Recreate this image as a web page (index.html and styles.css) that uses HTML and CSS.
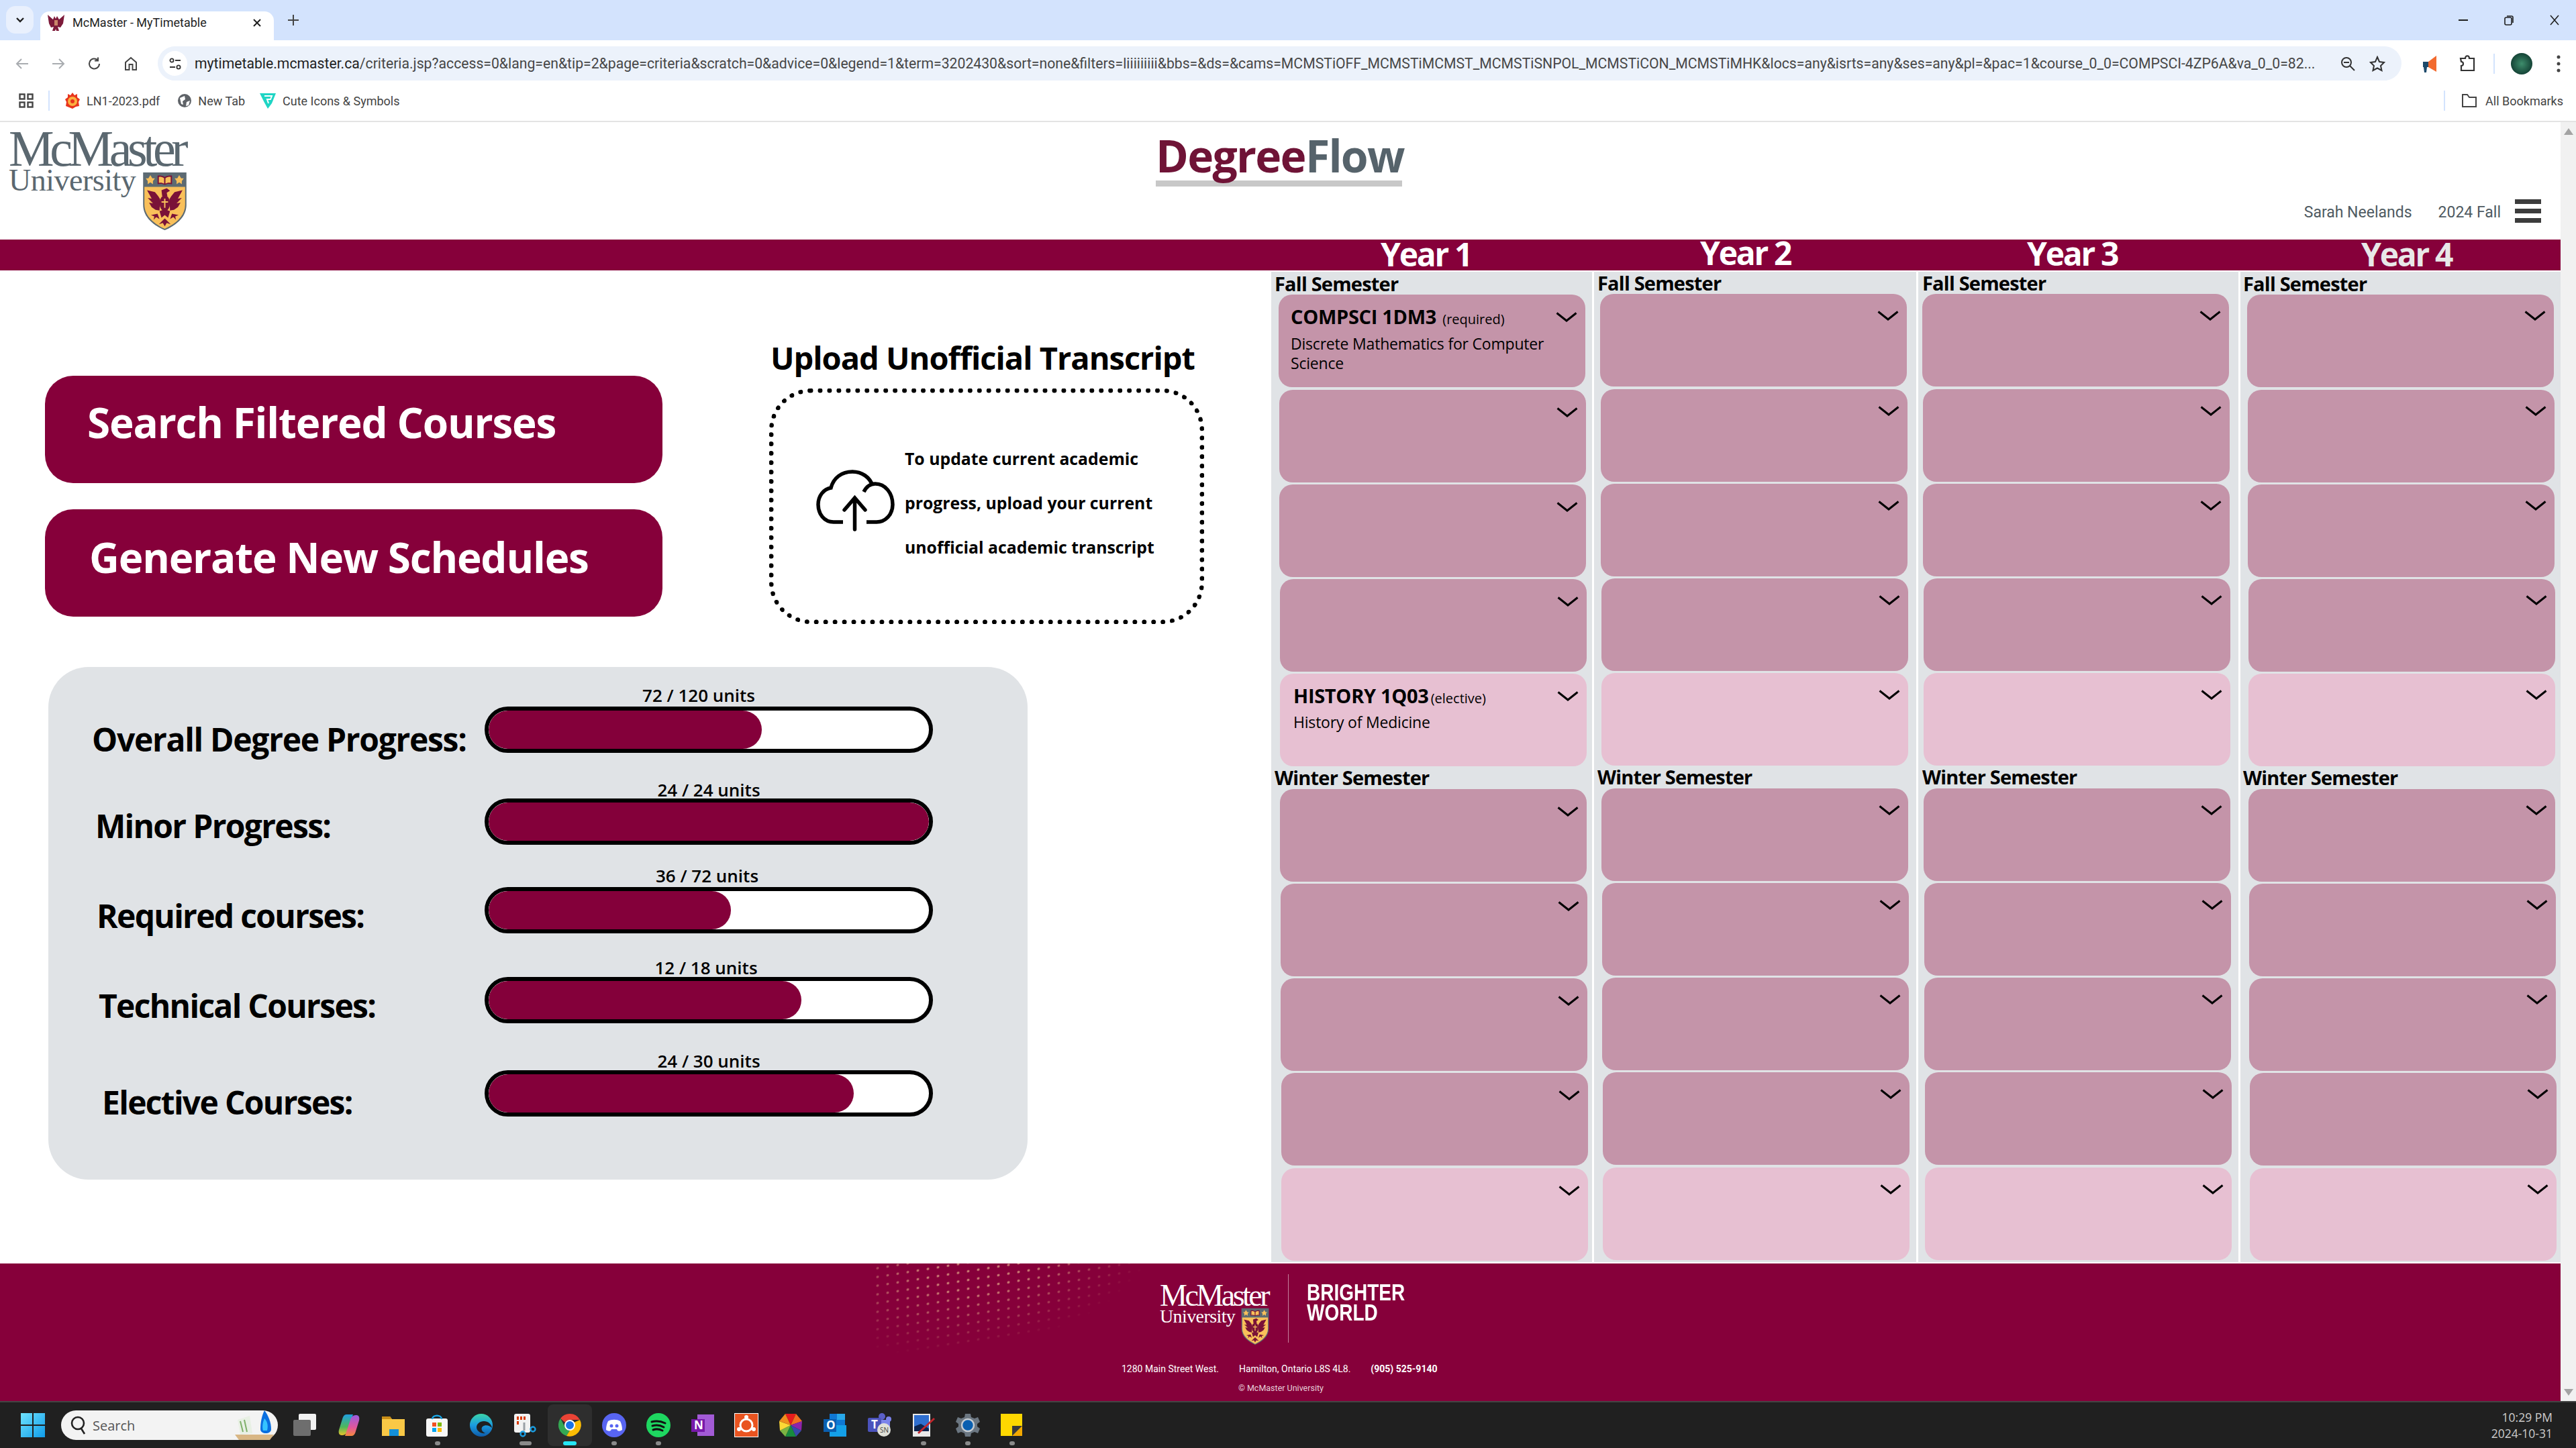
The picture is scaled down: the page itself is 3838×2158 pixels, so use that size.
FILE: index.html
```html
<!DOCTYPE html>
<html lang="en">

<head>
    <meta charset="UTF-8" />
    <title>McMaster - MyTimetable</title>
    <link rel="stylesheet" href="styles.css">
</head>

<body>
    <svg class="defs" width="0" height="0">
        <symbol id="chevron" viewBox="0 0 32 15">
            <polyline points="1.5,1.5 16,13 30.5,1.5" fill="none" stroke="#000" stroke-width="3" />
        </symbol>
        <symbol id="shield" viewBox="0 0 68 90">
            <path d="M1 1H67V50C67 70 50 82 34 89C18 82 1 70 1 50Z" fill="#5c6a72" />
            <path d="M3 23H65V50C65 68 49 80 34 87C19 80 3 68 3 50Z" fill="#f9c05a" />
            <path d="M23 6C27 5 31 6 34 8C37 6 41 5 45 6V19C41 18 37 18 34 20C31 18 27 18 23 19Z" fill="#7a1238" />
            <path d="M25 8C28 7 31 8 33 10V18C31 17 28 16 25 17ZM35 10C37 8 40 7 43 8V17C40 16 37 17 35 18Z" fill="#f9c05a" />
            <path d="M12 5L15 10L19 10L16 14L16 19L12 16L8 19L8 14L5 10L9 10ZM56 5L59 10L63 10L60 14L60 19L56 16L52 19L52 14L49 10L53 10Z" fill="#f9c05a" />
            <g fill="#7a1238">
                <path d="M7 28L19 31L24 37L27 42L26 59L20 58L14 54L10 47L16 48L8 40L14 41Z" />
                <path d="M61 28L49 31L44 37L41 42L42 59L48 58L54 54L58 47L52 48L60 40L54 41Z" />
                <path d="M29 28L37 25L42 29L37 32L38 37L30 37Z" />
                <ellipse cx="34" cy="48" rx="8" ry="12" />
                <path d="M26 60L34 57L42 60L39 70L34 66L29 70Z" />
                <path d="M25 80L34 71L43 80L37 78L34 83L31 78Z" />
                <path d="M13 66L23 64L26 72L21 69L17 73L18 68ZM55 66L45 64L42 72L47 69L51 73L50 68Z" />
            </g>
            <path d="M33 41H35V45H39V47H35V55H33V47H29V45H33Z" fill="#f9c05a" />
        </symbol>
        <symbol id="favicon" viewBox="0 0 27 27">
            <path d="M1 2L9 9L11 4L13 8L15 4L18 9L26 2L24 15L20 21L16 20L18 26H14L13 23L12 26H8L10 20L6 21L3 15Z" fill="#7d1a3a" />
            <path d="M11 10H16V18H11Z" fill="#c9866a" />
        </symbol>
    </svg>

    <!-- BROWSER -->
    <div class="tabstrip">
        <div class="tab-search">
            <svg width="14" height="10" viewBox="0 0 14 10"><polyline points="2,2 7,7 12,2" fill="none" stroke="#1f1f1f" stroke-width="2.4" /></svg>
        </div>
        <div class="tab">
            <svg class="tab-icon" width="27" height="27"><use href="#favicon" /></svg>
            <span class="tab-title">McMaster - MyTimetable</span>
            <svg class="tab-close" width="14" height="14" viewBox="0 0 14 14"><path d="M2 2L12 12M12 2L2 12" stroke="#1f1f1f" stroke-width="2" /></svg>
        </div>
        <svg class="tab-new" width="18" height="18" viewBox="0 0 18 18"><path d="M9 1V17M1 9H17" stroke="#444" stroke-width="2" /></svg>
        <div class="window-controls">
            <svg width="16" height="16" viewBox="0 0 16 16"><path d="M1 8H15" stroke="#1f1f1f" stroke-width="2" /></svg>
            <svg width="16" height="16" viewBox="0 0 16 16"><rect x="2" y="4" width="10" height="11" rx="2" fill="none" stroke="#1f1f1f" stroke-width="1.6" /><path d="M5 2H12C13 2 14 3 14 4V12" fill="none" stroke="#1f1f1f" stroke-width="1.6" /></svg>
            <svg width="16" height="16" viewBox="0 0 16 16"><path d="M2 1L14 15M14 1L2 15" stroke="#1f1f1f" stroke-width="1.6" /></svg>
        </div>
    </div>

    <div class="toolbar">
        <svg class="nav-icon" width="22" height="22" viewBox="0 0 22 22"><path d="M20 11H3M10 4L3 11L10 18" fill="none" stroke="#a9acb0" stroke-width="2" /></svg>
        <svg class="nav-icon" width="22" height="22" viewBox="0 0 22 22"><path d="M2 11H19M12 4L19 11L12 18" fill="none" stroke="#a9acb0" stroke-width="2" /></svg>
        <svg class="nav-icon" width="22" height="22" viewBox="0 0 22 22"><path d="M18 11A7.5 7.5 0 1 1 15.5 5.4M16 1.5V6.5H11" fill="none" stroke="#444" stroke-width="2" /></svg>
        <svg class="nav-icon" width="22" height="22" viewBox="0 0 22 22"><path d="M3 20V9L11 2L19 9V20H13.5V12H8.5V20Z" fill="none" stroke="#444" stroke-width="2" /></svg>
        <div class="omnibox">
            <div class="site-settings">
                <svg width="20" height="20" viewBox="0 0 20 20"><circle cx="5" cy="5" r="2.6" fill="none" stroke="#333" stroke-width="1.8" /><path d="M10 5H18M2 15H10" stroke="#333" stroke-width="1.8" /><circle cx="15" cy="15" r="2.6" fill="none" stroke="#333" stroke-width="1.8" /></svg>
            </div>
            <div class="url"><b>mytimetable.mcmaster.ca</b>/criteria.jsp?access=0&amp;lang=en&amp;tip=2&amp;page=criteria&amp;scratch=0&amp;advice=0&amp;legend=1&amp;term=3202430&amp;sort=none&amp;filters=liiiiiiiii&amp;bbs=&amp;ds=&amp;cams=MCMSTiOFF_MCMSTiMCMST_MCMSTiSNPOL_MCMSTiCON_MCMSTiMHK&amp;locs=any&amp;isrts=any&amp;ses=any&amp;pl=&amp;pac=1&amp;course_0_0=COMPSCI-4ZP6A&amp;va_0_0=82...</div>
            <svg class="omni-zoom" width="24" height="24" viewBox="0 0 24 24"><circle cx="10" cy="10" r="7" fill="none" stroke="#333" stroke-width="2" /><path d="M15 15L22 22M6 10H14" stroke="#333" stroke-width="2" /></svg>
            <svg class="omni-star" width="24" height="24" viewBox="0 0 24 24"><path d="M12 2L15 9L22 10L17 15L18.5 22L12 18.5L5.5 22L7 15L2 10L9 9Z" fill="none" stroke="#333" stroke-width="2" /></svg>
        </div>
        <svg class="ext-icon" width="26" height="30" viewBox="0 0 26 30"><path d="M2 12H10V20H8L7 28H4L3 20H2Z" fill="#1d4a6b" /><path d="M10 12L22 3V27L10 20Z" fill="#f26a2e" /></svg>
        <svg class="ext-puzzle" width="24" height="28" viewBox="0 0 24 28"><path d="M2 6H9C9 1 15 1 15 6H22V24H3V17C7 17 7 11 3 11Z" fill="none" stroke="#333" stroke-width="2.2" /></svg>
        <div class="toolbar-sep"></div>
        <div class="avatar"></div>
        <svg class="more" width="6" height="26" viewBox="0 0 6 26"><circle cx="3" cy="3" r="2.5" fill="#444" /><circle cx="3" cy="13" r="2.5" fill="#444" /><circle cx="3" cy="23" r="2.5" fill="#444" /></svg>
    </div>

    <div class="bookmarks">
        <svg class="apps" width="22" height="22" viewBox="0 0 22 22"><g fill="none" stroke="#444" stroke-width="2.4"><rect x="1.5" y="1.5" width="7" height="7" /><rect x="13.5" y="1.5" width="7" height="7" /><rect x="1.5" y="13.5" width="7" height="7" /><rect x="13.5" y="13.5" width="7" height="7" /></g></svg>
        <div class="bm-sep"></div>
        <div class="bookmark bm-first">
            <svg width="24" height="26" viewBox="0 0 24 26"><path d="M12 1L15 5L19 3L19 8L23 11L21 15L22 21L17 22L12 25L7 23L2 21L3 15L1 11L5 8L5 3L9 5Z" fill="#e8341c" /><circle cx="12" cy="14" r="7" fill="#fbb040" /><circle cx="12" cy="14" r="3" fill="#e8341c" /></svg>
            <span>LN1-2023.pdf</span>
        </div>
        <div class="bookmark bm-new">
            <svg width="22" height="22" viewBox="0 0 22 22"><circle cx="11" cy="11" r="10" fill="#5f6368" /><path d="M4 7L11 4L12 9L8 12L9 17L6 16ZM14 13L19 11L17 18L13 19Z" fill="#fff" /></svg>
            <span>New Tab</span>
        </div>
        <div class="bookmark">
            <svg width="26" height="26" viewBox="0 0 26 26"><path d="M1 2H25L19 17L13 25L8 16Z" fill="#1ed5c4" /><path d="M8 6H19L17 11H12L14 17" fill="none" stroke="#fff" stroke-width="2" /></svg>
            <span>Cute Icons &amp; Symbols</span>
        </div>
        <div class="bm-sep bm-sep-right"></div>
        <div class="bookmark bm-all">
            <svg width="24" height="22" viewBox="0 0 24 22"><path d="M2 2H9L12 6H22V20H2Z" fill="none" stroke="#444" stroke-width="2" /></svg>
            <span>All Bookmarks</span>
        </div>
    </div>

    <div class="window">
        <div class="page">
            <!-- HEADER -->
            <header class="site-header">
                <div class="logo">
                    <div class="logo-name">McMaster</div>
                    <div class="logo-uni">University</div>
                    <svg class="logo-shield"><use href="#shield" /></svg>
                </div>
                <div class="brand">
                    <div class="brand-name"><span class="brand-degree">Degree</span><span class="brand-flow">Flow</span></div>
                </div>
                <div class="user">
                    <span class="user-name">Sarah Neelands</span>
                    <span class="user-term">2024 Fall</span>
                    <div class="burger"><i></i><i></i><i></i></div>
                </div>
            </header>

            <div class="band">
                <div class="year year-1">Year 1</div>
                <div class="year year-2">Year 2</div>
                <div class="year year-3">Year 3</div>
                <div class="year year-4">Year 4</div>
            </div>

            <main class="content">
                <section class="left">
                    <div class="intro">
                        <div class="actions">
                            <a class="action action-search">Search Filtered Courses</a>
                            <a class="action action-generate">Generate New Schedules</a>
                        </div>
                        <div class="upload">
                            <h2 class="upload-title">Upload Unofficial Transcript</h2>
                            <div class="upload-box">
                                <svg class="upload-icon" width="118" height="92" viewBox="0 0 118 92">
                                    <path d="M40 78H26C12 78 3 66 3 52C3 39 11 29 22 27C26 12 38 3 54 3C68 3 80 11 84 24M71 33C75 25 81 21 88 21C103 21 114 35 114 52C114 67 103 78 90 78H75" fill="none" stroke="#000" stroke-width="5.5" />
                                    <path d="M57.5 89V43M42 60L57.5 42L73 60" fill="none" stroke="#000" stroke-width="5.5" stroke-linecap="round" />
                                </svg>
                                <p class="upload-text">To update current academic<br>progress, upload your current<br>unofficial academic transcript</p>
                            </div>
                        </div>
                    </div>

                    <!-- PROGRESSO -->
                    <div class="progress-panel">
                        <div class="progress-row">
                            <div class="progress-label">Overall Degree Progress:</div>
                            <div class="meter">
                                <div class="meter-caption">72 / 120 units</div>
                                <div class="meter-bar"><div class="meter-fill" style="width: 62%"></div></div>
                            </div>
                        </div>
                        <div class="progress-row">
                            <div class="progress-label">Minor Progress:</div>
                            <div class="meter">
                                <div class="meter-caption">24 / 24 units</div>
                                <div class="meter-bar"><div class="meter-fill" style="width: 100%"></div></div>
                            </div>
                        </div>
                        <div class="progress-row">
                            <div class="progress-label">Required courses:</div>
                            <div class="meter">
                                <div class="meter-caption">36 / 72 units</div>
                                <div class="meter-bar"><div class="meter-fill" style="width: 55%"></div></div>
                            </div>
                        </div>
                        <div class="progress-row">
                            <div class="progress-label">Technical Courses:</div>
                            <div class="meter">
                                <div class="meter-caption">12 / 18 units</div>
                                <div class="meter-bar"><div class="meter-fill" style="width: 71%"></div></div>
                            </div>
                        </div>
                        <div class="progress-row">
                            <div class="progress-label">Elective Courses:</div>
                            <div class="meter">
                                <div class="meter-caption">24 / 30 units</div>
                                <div class="meter-bar"><div class="meter-fill" style="width: 83%"></div></div>
                            </div>
                        </div>
                    </div>
                </section>

                <!-- YEAR 1 -->
                <section class="planner">
                    <div class="col col-1">
                        <div class="semester">
                            <div class="sem-label">Fall Semester</div>
                            <div class="slot">
                                <svg class="chev"><use href="#chevron" /></svg>
                                <div class="course"><span class="course-code">COMPSCI 1DM3</span> <span class="course-kind">(required)</span></div>
                                <div class="course-title">Discrete Mathematics for Computer Science</div>
                            </div>
                            <div class="slot"><svg class="chev"><use href="#chevron" /></svg></div>
                            <div class="slot"><svg class="chev"><use href="#chevron" /></svg></div>
                            <div class="slot"><svg class="chev"><use href="#chevron" /></svg></div>
                            <div class="slot slot-light">
                                <svg class="chev"><use href="#chevron" /></svg>
                                <div class="course course-tight"><span class="course-code">HISTORY 1Q03</span><span class="course-kind">(elective)</span></div>
                                <div class="course-title">History of Medicine</div>
                            </div>
                        </div>
                        <div class="semester semester-winter">
                            <div class="sem-label">Winter Semester</div>
                            <div class="slot"><svg class="chev"><use href="#chevron" /></svg></div>
                            <div class="slot"><svg class="chev"><use href="#chevron" /></svg></div>
                            <div class="slot"><svg class="chev"><use href="#chevron" /></svg></div>
                            <div class="slot"><svg class="chev"><use href="#chevron" /></svg></div>
                            <div class="slot slot-light"><svg class="chev"><use href="#chevron" /></svg></div>
                        </div>
                    </div>

                    <div class="col col-2">
                        <div class="semester">
                            <div class="sem-label">Fall Semester</div>
                            <div class="slot"><svg class="chev"><use href="#chevron" /></svg></div>
                            <div class="slot"><svg class="chev"><use href="#chevron" /></svg></div>
                            <div class="slot"><svg class="chev"><use href="#chevron" /></svg></div>
                            <div class="slot"><svg class="chev"><use href="#chevron" /></svg></div>
                            <div class="slot slot-light"><svg class="chev"><use href="#chevron" /></svg></div>
                        </div>
                        <div class="semester semester-winter">
                            <div class="sem-label">Winter Semester</div>
                            <div class="slot"><svg class="chev"><use href="#chevron" /></svg></div>
                            <div class="slot"><svg class="chev"><use href="#chevron" /></svg></div>
                            <div class="slot"><svg class="chev"><use href="#chevron" /></svg></div>
                            <div class="slot"><svg class="chev"><use href="#chevron" /></svg></div>
                            <div class="slot slot-light"><svg class="chev"><use href="#chevron" /></svg></div>
                        </div>
                    </div>

                    <div class="col col-3">
                        <div class="semester">
                            <div class="sem-label">Fall Semester</div>
                            <div class="slot"><svg class="chev"><use href="#chevron" /></svg></div>
                            <div class="slot"><svg class="chev"><use href="#chevron" /></svg></div>
                            <div class="slot"><svg class="chev"><use href="#chevron" /></svg></div>
                            <div class="slot"><svg class="chev"><use href="#chevron" /></svg></div>
                            <div class="slot slot-light"><svg class="chev"><use href="#chevron" /></svg></div>
                        </div>
                        <div class="semester semester-winter">
                            <div class="sem-label">Winter Semester</div>
                            <div class="slot"><svg class="chev"><use href="#chevron" /></svg></div>
                            <div class="slot"><svg class="chev"><use href="#chevron" /></svg></div>
                            <div class="slot"><svg class="chev"><use href="#chevron" /></svg></div>
                            <div class="slot"><svg class="chev"><use href="#chevron" /></svg></div>
                            <div class="slot slot-light"><svg class="chev"><use href="#chevron" /></svg></div>
                        </div>
                    </div>

                    <div class="col col-4">
                        <div class="semester">
                            <div class="sem-label">Fall Semester</div>
                            <div class="slot"><svg class="chev"><use href="#chevron" /></svg></div>
                            <div class="slot"><svg class="chev"><use href="#chevron" /></svg></div>
                            <div class="slot"><svg class="chev"><use href="#chevron" /></svg></div>
                            <div class="slot"><svg class="chev"><use href="#chevron" /></svg></div>
                            <div class="slot slot-light"><svg class="chev"><use href="#chevron" /></svg></div>
                        </div>
                        <div class="semester semester-winter">
                            <div class="sem-label">Winter Semester</div>
                            <div class="slot"><svg class="chev"><use href="#chevron" /></svg></div>
                            <div class="slot"><svg class="chev"><use href="#chevron" /></svg></div>
                            <div class="slot"><svg class="chev"><use href="#chevron" /></svg></div>
                            <div class="slot"><svg class="chev"><use href="#chevron" /></svg></div>
                            <div class="slot slot-light"><svg class="chev"><use href="#chevron" /></svg></div>
                        </div>
                    </div>
                </section>
            </main>

            <!-- FOOTER -->
            <footer class="site-footer">
                <div class="footer-dots"></div>
                <div class="footer-mark">
                    <div class="footer-logo">
                        <div class="footer-name">McMaster</div>
                        <div class="footer-uni">University</div>
                        <svg class="footer-shield"><use href="#shield" /></svg>
                    </div>
                    <div class="footer-rule"></div>
                    <div class="footer-slogan">BRIGHTER<br>WORLD</div>
                </div>
                <div class="footer-address">
                    <span>1280 Main Street West.</span>
                    <span>Hamilton, Ontario L8S 4L8.</span>
                    <b>(905) 525-9140</b>
                </div>
                <div class="footer-copy">© McMaster University</div>
            </footer>
        </div>

        <div class="scrollbar">
            <svg width="14" height="10" viewBox="0 0 14 10"><path d="M7 0L14 10H0Z" fill="#a3a3a3" /></svg>
            <svg width="14" height="10" viewBox="0 0 14 10"><path d="M7 10L14 0H0Z" fill="#a3a3a3" /></svg>
        </div>
    </div>

    <!-- TASKBAR -->
    <div class="taskbar">
        <svg class="start" width="36" height="36" viewBox="0 0 36 36">
            <defs><linearGradient id="win" x1="0" y1="0" x2="1" y2="1"><stop offset="0" stop-color="#6fe3ff" /><stop offset="1" stop-color="#0f9be8" /></linearGradient></defs>
            <path d="M0 0H17V17H0ZM19 0H36V17H19ZM0 19H17V36H0ZM19 19H36V36H19Z" fill="url(#win)" />
        </svg>
        <div class="search-pill">
            <svg width="28" height="30" viewBox="0 0 28 30"><circle cx="13" cy="12" r="9" fill="none" stroke="#222" stroke-width="2.6" /><path d="M18 20L23 28" stroke="#222" stroke-width="2.6" /></svg>
            <span>Search</span>
            <svg class="search-art" width="64" height="44" viewBox="0 0 64 44"><path d="M2 36H60L54 44H8Z" fill="#d8b684" /><path d="M6 14L24 8L28 34L10 36Z" fill="#e8f0e4" /><path d="M10 16L14 32M16 14L20 32" stroke="#7fb069" stroke-width="2" /><path d="M46 0C52 8 56 18 56 28C56 36 40 36 40 28C40 18 42 8 46 0Z" fill="#0a6fe0" /><path d="M46 12C50 16 52 22 50 30L44 30C42 24 44 16 46 12Z" fill="#35c3ff" /></svg>
        </div>
        <div class="tasks">
            <div class="task">
                <svg width="36" height="36" viewBox="0 0 36 36"><rect x="9" y="1" width="26" height="24" rx="2" fill="#f2f2f2" /><rect x="1" y="10" width="26" height="24" rx="2" fill="#6e6e6e" /></svg>
            </div>
            <div class="task">
                <svg width="36" height="36" viewBox="0 0 36 36"><defs><linearGradient id="copa" x1="0" y1="0" x2="0" y2="1"><stop offset="0" stop-color="#1f9fe0" /><stop offset=".6" stop-color="#4fb85a" /><stop offset="1" stop-color="#e8c32a" /></linearGradient><linearGradient id="copb" x1="0" y1="0" x2="0" y2="1"><stop offset="0" stop-color="#9a5ce0" /><stop offset=".6" stop-color="#e2579a" /><stop offset="1" stop-color="#f58a3c" /></linearGradient></defs><path d="M14 2H24L16 26C15 30 12 33 8 33H7C3 33 2 29 3 25L8 9C9 5 11 2 14 2Z" fill="url(#copa)" /><path d="M22 34H12L20 10C21 6 24 3 28 3H29C33 3 34 7 33 11L28 27C27 31 25 34 22 34Z" fill="url(#copb)" /></svg>
            </div>
            <div class="task">
                <svg width="36" height="36" viewBox="0 0 36 36"><path d="M1 5H13L16 9H35V34H1Z" fill="#f9c846" /><path d="M1 5H13L16 9H1Z" fill="#c98e17" /><path d="M12 24H26V34H12Z" fill="#1490d8" /></svg>
            </div>
            <div class="task task-run">
                <svg width="36" height="36" viewBox="0 0 36 36"><rect x="2" y="8" width="32" height="27" rx="3" fill="#f7f7f7" /><path d="M11 9C11 2 25 2 25 9" fill="none" stroke="#1aa7e8" stroke-width="2.4" /><path d="M11 14H17V20H11Z" fill="#f25022" /><path d="M19 14H25V20H19Z" fill="#7fba00" /><path d="M11 22H17V28H11Z" fill="#00a4ef" /><path d="M19 22H25V28H19Z" fill="#ffb900" /></svg>
            </div>
            <div class="task">
                <svg width="36" height="36" viewBox="0 0 36 36"><defs><linearGradient id="edge" x1="0" y1="0" x2="0" y2="1"><stop offset="0" stop-color="#3bd4a8" /><stop offset=".5" stop-color="#1a9ce0" /><stop offset="1" stop-color="#0f5aa8" /></linearGradient></defs><circle cx="18" cy="18" r="17" fill="url(#edge)" /><path d="M22 12C28 12 33 16 34 22C30 18 24 17 20 20C17 23 19 28 24 30C18 31 11 27 11 21C11 16 16 12 22 12Z" fill="#202020" /></svg>
            </div>
            <div class="task task-run task-run-wide">
                <svg width="36" height="36" viewBox="0 0 36 36"><rect x="1" y="1" width="24" height="28" rx="3" fill="#f2f2f2" /><path d="M5 5H8V10H5ZM10 5H13V10H10ZM15 5H18V10H15ZM5 12H8V17H5Z" fill="#d83b01" /><path d="M16 14V26" stroke="#9aa0a6" stroke-width="3" /><circle cx="14" cy="31" r="3.5" fill="none" stroke="#1a9ce0" stroke-width="2.4" /><circle cx="29" cy="24" r="3.5" fill="none" stroke="#1a9ce0" stroke-width="2.4" /></svg>
            </div>
            <div class="task task-active">
                <svg width="36" height="36" viewBox="0 0 36 36"><path d="M18 1A17 17 0 0 1 33 10H18A8 8 0 0 0 11 14L4 8A17 17 0 0 1 18 1Z" fill="#ea4335" /><path d="M4 8L11 21A8 8 0 0 0 18 26L13 34A17 17 0 0 1 4 8Z" fill="#34a853" /><path d="M33 10A17 17 0 0 1 13 34L21 21A8 8 0 0 0 24 14Z" fill="#fbbc04" /><circle cx="18" cy="18" r="7" fill="#1a73e8" stroke="#fff" stroke-width="2" /></svg>
            </div>
            <div class="task task-run">
                <svg width="36" height="36" viewBox="0 0 36 36"><circle cx="18" cy="18" r="18" fill="#5865f2" /><path d="M9 12C14 9 22 9 27 12C29 16 30 20 30 25C27 27 25 27 23 26L22 24H14L13 26C11 27 9 27 6 25C6 20 7 16 9 12Z" fill="#fff" /><circle cx="14" cy="19" r="2.5" fill="#5865f2" /><circle cx="22" cy="19" r="2.5" fill="#5865f2" /></svg>
            </div>
            <div class="task task-run">
                <svg width="36" height="36" viewBox="0 0 36 36"><circle cx="18" cy="18" r="18" fill="#1ed760" /><path d="M8 13C15 11 22 12 28 15M9 19C15 17 21 18 26 21M10 25C15 23 20 24 24 26" fill="none" stroke="#111" stroke-width="3" stroke-linecap="round" /></svg>
            </div>
            <div class="task">
                <svg width="36" height="36" viewBox="0 0 36 36"><rect x="10" y="2" width="25" height="32" fill="#a35bd6" /><rect x="1" y="9" width="20" height="19" fill="#7719aa" /><text class="icon-letter" x="5" y="24">N</text></svg>
            </div>
            <div class="task">
                <svg width="36" height="36" viewBox="0 0 36 36"><rect width="36" height="36" fill="#fff" /><rect x="1" y="1" width="34" height="34" fill="#e95420" /><circle cx="18" cy="18" r="9" fill="none" stroke="#fff" stroke-width="3" /><circle cx="18" cy="6" r="3" fill="#fff" /><circle cx="7" cy="24" r="3" fill="#fff" /><circle cx="29" cy="24" r="3" fill="#fff" /></svg>
            </div>
            <div class="task">
                <svg width="36" height="36" viewBox="0 0 36 36"><path d="M18 18L10 1H26Z" fill="#e81c1c" /><path d="M18 18L26 1L35 12Z" fill="#f26f21" /><path d="M18 18L35 12L34 26Z" fill="#8e24aa" /><path d="M18 18L34 26L26 35Z" fill="#3949ab" /><path d="M18 18L26 35H10Z" fill="#178a3e" /><path d="M18 18L10 35L2 26Z" fill="#7cb342" /><path d="M18 18L2 26L1 12Z" fill="#fdd835" /><path d="M18 18L1 12L10 1Z" fill="#ef8f1d" /></svg>
            </div>
            <div class="task">
                <svg width="36" height="36" viewBox="0 0 36 36"><path d="M10 1H33V20H10Z" fill="#0f78d4" /><path d="M21 1H33V10H21Z" fill="#28a8ea" /><path d="M10 18L35 18V35H10Z" fill="#14a0e8" /><rect x="1" y="9" width="19" height="19" fill="#0a5fb0" /><text class="icon-letter" x="5" y="24">O</text></svg>
            </div>
            <div class="task">
                <svg width="36" height="36" viewBox="0 0 36 36"><circle cx="22" cy="5" r="5" fill="#5b5fc7" /><circle cx="32" cy="9" r="4" fill="#7b83eb" /><rect x="14" y="10" width="20" height="16" rx="3" fill="#7b83eb" /><rect x="1" y="7" width="20" height="21" rx="2" fill="#4b53bc" /><text class="icon-letter" x="6" y="23">T</text><circle cx="25" cy="25" r="10" fill="#e0e0d8" /><text class="icon-initials" x="19" y="29">SN</text></svg>
            </div>
            <div class="task task-run">
                <svg width="36" height="36" viewBox="0 0 36 36"><rect x="2" y="1" width="26" height="34" fill="#e9e9e9" /><rect x="4" y="3" width="22" height="24" fill="#2f6fd0" /><path d="M4 20L14 16L26 23V27H4Z" fill="#0d2550" /><path d="M10 30L34 8" stroke="#c2272d" stroke-width="3" /></svg>
            </div>
            <div class="task task-run">
                <svg width="36" height="36" viewBox="0 0 36 36"><path d="M14 1H22L23 6L28 8L33 6L36 13L32 16V20L36 23L33 30L28 28L23 30L22 35H14L13 30L8 28L3 30L0 23L4 20V16L0 13L3 6L8 8L13 6Z" fill="#6b7681" /><circle cx="18" cy="18" r="9" fill="#0a5fb0" stroke="#c6ccd2" stroke-width="2.5" /></svg>
            </div>
            <div class="task task-run">
                <svg width="36" height="36" viewBox="0 0 36 36"><path d="M2 1H34V34H2Z" fill="#ffd800" /><path d="M34 19V34H19Z" fill="#f3a800" /><path d="M19 19H34L19 34Z" fill="#3a3a3a" /></svg>
            </div>
        </div>
        <div class="clock">
            <div>10:29 PM</div>
            <div>2024-10-31</div>
        </div>
    </div>
</body>

</html>
```
FILE: styles.css
```css
* {
    box-sizing: border-box;
}

body {
    margin: 0;
    width: 3838px;
    height: 2158px;
    overflow: hidden;
    display: flex;
    flex-direction: column;
    font-family: "Open Sans", Arial, sans-serif;
    background: #fff;
}

.defs {
    position: absolute;
}

/* browser */
.tabstrip {
    height: 60px;
    background: #d3e3fd;
    display: flex;
    align-items: flex-start;
    font-family: Roboto, Arial, sans-serif;
}

.tab-search {
    width: 41px;
    height: 41px;
    margin: 9px 0 0 9px;
    border-radius: 14px;
    background: #e9f0fd;
    display: flex;
    align-items: center;
    justify-content: center;
}

.tab {
    width: 348px;
    height: 43px;
    margin: 17px 0 0 10px;
    padding: 0 0 10px 10px;
    background: #fff;
    border-radius: 14px 14px 0 0;
    display: flex;
    align-items: center;
    gap: 11px;
}

.tab-title {
    font-size: 18px;
    color: #1f1f1f;
    flex: 1;
}

.tab-close {
    margin-right: 18px;
}

.tab-new {
    margin: 21px 0 0 20px;
}

.window-controls {
    margin-left: auto;
    margin-top: 22px;
    display: flex;
    gap: 52px;
    padding-right: 24px;
}

.toolbar {
    height: 60px;
    background: #fff;
    border-radius: 14px 14px 0 0;
    display: flex;
    align-items: center;
    padding: 9px 0 0 22px;
}

.nav-icon {
    margin-right: 32px;
}

.omnibox {
    width: 3343px;
    height: 51px;
    margin-left: -3px;
    border-radius: 26px;
    background: #ecf2fb;
    display: flex;
    align-items: center;
    padding-left: 7px;
}

.site-settings {
    width: 37px;
    height: 37px;
    border-radius: 50%;
    background: #fff;
    display: flex;
    align-items: center;
    justify-content: center;
}

.url {
    width: 3171px;
    margin-left: 11px;
    font-family: Roboto, Arial, sans-serif;
    font-size: 21.2px;
    color: #474747;
    white-space: nowrap;
    overflow: hidden;
}

.url b {
    font-weight: 400;
    color: #1f1f1f;
}

.omni-zoom {
    margin-left: 25px;
}

.omni-star {
    margin-left: 20px;
}

.ext-icon {
    margin-left: 30px;
}

.ext-puzzle {
    margin-left: 30px;
}

.toolbar-sep {
    width: 2px;
    height: 30px;
    margin-left: 27px;
    background: #d3e3fd;
}

.avatar {
    width: 32px;
    height: 32px;
    margin-left: 24px;
    border-radius: 50%;
    background: radial-gradient(circle at 50% 50%, #3e8d6c, #123f33 75%);
}

.more {
    margin-left: 36px;
}

.bookmarks {
    height: 62px;
    background: #fff;
    border-bottom: 2px solid #e3e3e3;
    display: flex;
    align-items: center;
    padding-left: 28px;
    font-family: Roboto, Arial, sans-serif;
    font-size: 18px;
    color: #444;
}

.bm-sep {
    width: 2px;
    height: 30px;
    margin-left: 22px;
    background: #d3e3fd;
}

.bookmark {
    display: flex;
    align-items: center;
    gap: 9px;
    margin-right: 26px;
}

.bm-first {
    margin-left: 22px;
}

.bm-new {
    margin-right: 21px;
}

.bm-sep-right {
    margin-left: auto;
    margin-right: 24px;
}

.bm-all {
    margin-right: 19px;
    gap: 12px;
}

/* page */
.window {
    flex: 1;
    display: flex;
    min-height: 0;
}

.page {
    width: 3815px;
    display: flex;
    flex-direction: column;
}

.scrollbar {
    width: 23px;
    background: #f1f1f1;
    display: flex;
    flex-direction: column;
    justify-content: space-between;
    align-items: center;
    padding: 9px 0 8px;
}

.site-header {
    height: 175px;
    display: flex;
}

.logo {
    width: 1722px;
    padding: 15px 0 0 13px;
    position: relative;
    font-family: "Liberation Serif", "Times New Roman", serif;
    color: #5b6870;
}

.logo-name {
    font-size: 76px;
    line-height: 49px;
    letter-spacing: -6.4px;
}

.logo-uni {
    font-size: 46px;
    line-height: 46px;
    letter-spacing: -0.5px;
}

.logo-shield {
    position: absolute;
    left: 212px;
    top: 74px;
    width: 67px;
    height: 88px;
}

.brand {
    width: 1000px;
}

.brand-name {
    display: inline-block;
    width: 367px;
    margin-top: 11px;
    font-size: 66px;
    font-weight: 700;
    line-height: 76px;
    letter-spacing: -1.7px;
    white-space: nowrap;
    border-bottom: 9px solid #c8c8c8;
}

.brand-degree {
    color: #6f1336;
}

.brand-flow {
    color: #56636b;
}

.user {
    margin-left: auto;
    padding: 116px 29px 0 0;
    display: flex;
    align-items: flex-start;
    color: #4f5b62;
    font-family: Roboto, Arial, sans-serif;
    font-size: 23px;
}

.user-name,
.user-term {
    line-height: 38px;
}

.user-term {
    margin-left: 39px;
}

.burger {
    width: 39px;
    height: 35px;
    margin-top: -1px;
    margin-left: 21px;
    display: flex;
    flex-direction: column;
    justify-content: space-between;
}

.burger i {
    height: 7px;
    background: #3c3c3c;
}

.band {
    height: 46px;
    margin-bottom: 2px;
    background: #86003a;
    display: grid;
    grid-template-columns: 1895px 481px 482px 480px 477px;
}

.year {
    color: #fff;
    font-size: 48px;
    font-weight: 700;
    line-height: 44px;
    letter-spacing: -2.3px;
    white-space: nowrap;
}

.year-1 {
    grid-column: 2;
    padding-left: 162px;
}

.year-2 {
    padding-left: 157px;
    margin-top: -2px;
}

.year-3 {
    padding-left: 162px;
    margin-top: -1px;
}

.year-4 {
    padding-left: 180px;
    color: #e8e8e8;
}

.content {
    flex: 1;
    display: flex;
    min-height: 0;
}

.left {
    width: 1895px;
}

.intro {
    display: flex;
    padding: 100px 0 0 67px;
}

.actions {
    width: 920px;
    margin-top: 55px;
    display: flex;
    flex-direction: column;
    gap: 39px;
}

.action {
    height: 160px;
    border-radius: 42px;
    background: #86003a;
    color: #fff;
    font-size: 62px;
    font-weight: 700;
    line-height: 138px;
    letter-spacing: -1.2px;
    padding-left: 63px;
    white-space: nowrap;
}

.action-generate {
    padding-left: 66px;
    line-height: 142px;
}

.upload {
    margin-left: 159px;
}

.upload-title {
    margin: 0 0 0 2px;
    height: 74px;
    font-size: 47px;
    font-weight: 700;
    line-height: 56px;
    letter-spacing: -1px;
    white-space: nowrap;
}

.upload-box {
    width: 648px;
    height: 351px;
    border: 7px dotted #000;
    border-radius: 62px;
    display: flex;
    align-items: center;
    padding: 0 0 0 63px;
    gap: 14px;
}

.upload-icon {
    margin-bottom: 18px;
}

.upload-text {
    margin: 0 0 11px;
    font-size: 24.8px;
    font-weight: 700;
    line-height: 66px;
    white-space: nowrap;
}

.progress-panel {
    width: 1459px;
    height: 764px;
    margin: 64px 0 0 72px;
    padding-top: 25px;
    border-radius: 60px;
    background: #e0e3e6;
}

.progress-row {
    height: 103px;
    display: grid;
    grid-template-columns: 650px 668px;
}

.progress-label {
    font-size: 48px;
    font-weight: 700;
    line-height: 60px;
    white-space: nowrap;
    letter-spacing: -1.7px;
}

.meter-caption {
    height: 34px;
    font-size: 26px;
    font-weight: 600;
    line-height: 34px;
    text-align: center;
}

.meter-bar {
    height: 69px;
    border: 6px solid #000;
    border-radius: 35px;
    background: #fff;
    overflow: hidden;
}

.meter-fill {
    height: 100%;
    background: #84003a;
    border-radius: 30px;
}

.progress-row:nth-child(1) .progress-label { margin: 53px 0 0 65px; letter-spacing: -1.3px; }
.progress-row:nth-child(2) .progress-label { margin: 45px 0 0 70px; }
.progress-row:nth-child(3) .progress-label { margin: 47px 0 0 72px; }
.progress-row:nth-child(4) .progress-label { margin: 47px 0 0 75px; }
.progress-row:nth-child(5) .progress-label { margin: 52px 0 0 80px; }

.progress-row:nth-child(2) { margin-top: 34px; }
.progress-row:nth-child(3) { margin-top: 29px; }
.progress-row:nth-child(4) { margin-top: 31px; }
.progress-row:nth-child(5) { margin-top: 36px; }

.progress-row:nth-child(1) .meter-caption { padding-right: 30px; }
.progress-row:nth-child(3) .meter-caption { padding-right: 5px; }
.progress-row:nth-child(4) .meter-caption { padding-right: 8px; }

.progress-row:nth-child(2) .meter-caption {
    margin-top: 4px;
    margin-bottom: -4px;
}

.progress-row:nth-child(4) .meter-caption,
.progress-row:nth-child(5) .meter-caption {
    margin-top: 3px;
    margin-bottom: -3px;
}

/* planner */
.planner {
    flex: 1;
    display: grid;
    grid-template-columns: 478px 480px 477px 477px;
    column-gap: 3px;
    height: 1476px;
}

.col {
    background: #e0e3e6;
    --col: 11px;
    --top: 1px;
    --chev: 26px;
    padding-top: var(--top);
}

.col-2 {
    --col: 9px;
    --top: 0px;
    --chev: 25px;
}

.col-3 {
    --col: 6px;
    --top: 0px;
    --chev: 25px;
}

.col-4 {
    --col: 10px;
    --top: 1px;
    --chev: 24px;
}

.semester {
    --shift: 0px;
    display: flex;
    flex-direction: column;
    gap: 3.25px;
}

.semester-winter {
    --shift: 2px;
}

.sem-label {
    height: 30px;
    padding-left: 5px;
    font-size: 29px;
    font-weight: 700;
    line-height: 33px;
    letter-spacing: -0.8px;
    white-space: nowrap;
}

.col-3 .sem-label {
    padding-left: 6px;
}

.col-4 .sem-label {
    padding-left: 4px;
}

.slot {
    --row: 0px;
    position: relative;
    width: 457px;
    height: 138px;
    margin-left: calc(var(--col) + var(--shift) + var(--row));
    padding: 15px 0 0 18px;
    border-radius: 20px;
    background: #c494a9;
}

.slot:nth-child(n+3) {
    --row: 1px;
}

.slot:nth-child(n+5) {
    --row: 2px;
}

.slot-light {
    background: #e7c0d2;
    padding-left: 20px;
}

.chev {
    position: absolute;
    right: 12px;
    top: var(--chev);
    width: 32px;
    height: 15px;
}

.course {
    line-height: 36px;
    white-space: nowrap;
}

.course-code {
    font-size: 29px;
    font-weight: 700;
    letter-spacing: -0.3px;
}

.course-kind {
    margin-left: 5px;
    font-size: 20px;
}

.course-tight .course-kind {
    margin-left: 3px;
}

.course-title {
    width: 400px;
    margin-top: 3px;
    font-size: 23px;
    line-height: 29px;
    letter-spacing: -0.2px;
}

.slot-light .course-title {
    margin-top: 2px;
}

/* footer */
.site-footer {
    height: 205px;
    background: #86003a;
    color: #fff;
    position: relative;
    overflow: hidden;
    font-family: Roboto, Arial, sans-serif;
}

.footer-dots {
    position: absolute;
    left: 1300px;
    top: -30px;
    width: 400px;
    height: 140px;
    background-image: radial-gradient(circle, #c97a72 1.6px, transparent 2.2px);
    background-size: 15px 13px;
    transform: skewY(-9deg);
    -webkit-mask-image: radial-gradient(ellipse 65% 90% at 40% 20%, #000 30%, transparent 100%);
    mask-image: radial-gradient(ellipse 65% 90% at 40% 20%, #000 30%, transparent 100%);
}

.footer-mark {
    display: flex;
    padding: 16px 0 0 1728px;
}

.footer-logo {
    width: 161px;
    height: 106px;
    position: relative;
    padding-top: 14px;
    font-family: "Liberation Serif", "Times New Roman", serif;
}

.footer-name {
    font-size: 46px;
    line-height: 35px;
    letter-spacing: -3.5px;
}

.footer-uni {
    font-size: 28px;
    line-height: 27px;
    letter-spacing: -0.6px;
}

.footer-shield {
    position: absolute;
    left: 121px;
    top: 50px;
    width: 42px;
    height: 56px;
}

.footer-rule {
    width: 1px;
    height: 102px;
    margin-left: 30px;
    background: #c4809c;
}

.footer-slogan {
    margin: 12px 0 0 27px;
    font-family: "Liberation Sans", Arial, sans-serif;
    font-size: 35px;
    font-weight: 700;
    line-height: 30px;
    transform: scaleX(0.8);
    transform-origin: left top;
}

.footer-address {
    display: flex;
    margin-top: 23px;
    padding-left: 1671px;
    gap: 30px;
    font-size: 14px;
    line-height: 24px;
    white-space: nowrap;
}

.footer-copy {
    margin-top: 7px;
    padding-left: 1845px;
    font-size: 12.5px;
    line-height: 20px;
    color: #e6cfd9;
}

/* taskbar */
.taskbar {
    height: 70px;
    background: #202020;
    border-top: 2px solid #444;
    display: flex;
    align-items: center;
    padding-left: 31px;
    flex: none;
}

.start {
    flex: none;
}

.search-pill {
    width: 323px;
    height: 44px;
    margin-left: 24px;
    border-radius: 22px;
    background: #f3f3f3;
    display: flex;
    align-items: center;
    padding-left: 12px;
    gap: 7px;
    font-size: 20px;
    color: #555;
}

.search-art {
    margin-left: auto;
    margin-right: 2px;
}

.tasks {
    display: grid;
    grid-template-columns: repeat(17, 65.85px);
    margin-left: 7px;
}

.task {
    height: 62px;
    display: flex;
    align-items: center;
    justify-content: center;
    position: relative;
}

.task-run::after {
    content: "";
    position: absolute;
    bottom: 1px;
    left: 29px;
    width: 8px;
    height: 6px;
    border-radius: 3px;
    background: #8a8a8a;
}

.task-run-wide::after {
    left: 24px;
    width: 18px;
}

.task-active {
    background: #2e2e2e;
    border-radius: 8px;
}

.task-active::after {
    content: "";
    position: absolute;
    bottom: 1px;
    left: 23px;
    width: 20px;
    height: 6px;
    border-radius: 3px;
    background: #25e6f5;
}

.icon-letter {
    fill: #fff;
    font-size: 17px;
    font-weight: 700;
}

.icon-initials {
    fill: #444;
    font-size: 10px;
}

.clock {
    margin-left: auto;
    padding-right: 35px;
    color: #ccc;
    font-size: 17.5px;
    line-height: 24px;
    text-align: right;
}
```
